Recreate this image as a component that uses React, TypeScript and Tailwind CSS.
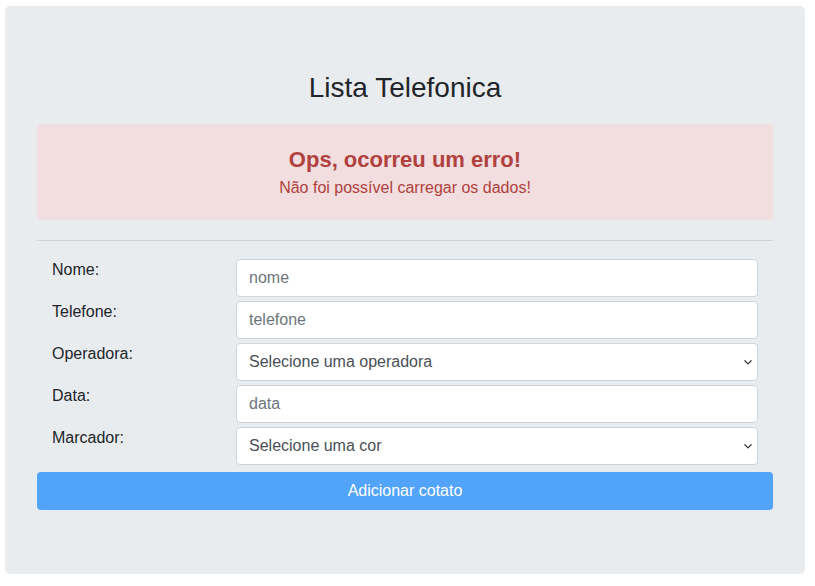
import React from "react";

const fields = [
  { label: "Nome:", kind: "input", placeholder: "nome" },
  { label: "Telefone:", kind: "input", placeholder: "telefone" },
  { label: "Operadora:", kind: "select", placeholder: "Selecione uma operadora" },
  { label: "Data:", kind: "input", placeholder: "data" },
  { label: "Marcador:", kind: "select", placeholder: "Selecione uma cor" },
];

function Chevron() {
  return (
    <svg
      className="pointer-events-none absolute right-[5px] top-1/2 -translate-y-1/2"
      width="10"
      height="10"
      viewBox="0 0 16 16"
      fill="none"
      stroke="#343a40"
      strokeWidth="2"
      strokeLinecap="round"
      strokeLinejoin="round"
    >
      <path d="M3 6l5 5 5-5" />
    </svg>
  );
}

export default function App() {
  return (
    <div className="min-h-screen bg-white pt-[6px] pl-[5px] font-['Liberation_Sans',Arial,sans-serif] text-[#212529]">
      <div className="w-[800px] h-[568px] rounded-[5px] bg-[#e9ecef] px-8 pt-16 pb-16">
        <h3 className="mt-[1px] mb-[19px] text-center text-[28px] leading-[34px]">Lista Telefonica</h3>

        <div className="h-[96px] rounded-[4px] bg-[#f2dede] pt-6 text-center text-[#b0413e]">
          <h4 className="text-[22px] leading-6 font-bold">Ops, ocorreu um erro!</h4>
          <p className="mt-1 text-[16px] leading-6">Não foi possível carregar os dados!</p>
        </div>

        <hr className="mt-5 mb-[18px] border-0 border-t border-[#d2d5d8]" />

        <form className="flex flex-col gap-1">
          {fields.map((f) => (
            <div key={f.label} className="flex items-start">
              <label className="w-[199px] shrink-0 pl-[15px] text-[16px] leading-6 -mt-[1px]">{f.label}</label>
              <div className="relative mr-[15px] flex-1">
                {f.kind === "input" ? (
                  <input
                    type="text"
                    placeholder={f.placeholder}
                    className="h-[38px] w-full rounded-[4px] border border-[#ced4da] bg-white px-3 text-[16px] text-[#495057] placeholder:text-[#6c757d] outline-none"
                  />
                ) : (
                  <>
                    <select
                      defaultValue=""
                      className="h-[38px] w-full appearance-none rounded-[4px] border border-[#ced4da] bg-white px-3 text-[16px] text-[#495057] outline-none"
                    >
                      <option value="">{f.placeholder}</option>
                    </select>
                    <Chevron />
                  </>
                )}
              </div>
            </div>
          ))}
          <button
            type="button"
            disabled
            className="mt-[3px] h-[38px] w-full rounded-[4px] bg-[#52a3fa] text-[16px] text-white"
          >
            Adicionar cotato
          </button>
        </form>
      </div>
    </div>
  );
}
